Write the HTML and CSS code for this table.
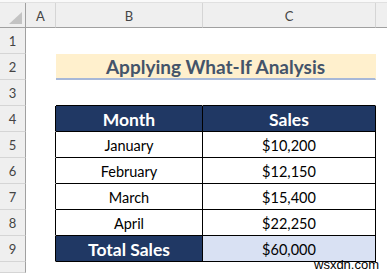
FILE: index.html
```html
<!DOCTYPE html>
<html>
<head>
<meta charset="utf-8">
<link rel="stylesheet" href="styles.css">
</head>
<body>
<div class="topstrip"></div>
<div class="sheet">
  <div class="ch corner"><span class="tri"></span></div>
  <div class="ch">A</div>
  <div class="ch">B</div>
  <div class="ch">C</div>
  <div class="ch last"></div>

  <div class="rh">1</div><div class="c"></div><div class="c"></div><div class="c"></div><div class="c"></div>

  <div class="rh">2</div><div class="c"></div><div class="c title">Applying What-If Analysis</div><div class="c"></div>

  <div class="rh">3</div><div class="c"></div><div class="c edge-b"></div><div class="c edge-b"></div><div class="c"></div>

  <div class="rh">4</div><div class="c edge-r"></div><div class="c t head">Month</div><div class="c t head">Sales</div><div class="c"></div>

  <div class="rh">5</div><div class="c edge-r"></div><div class="c t">January</div><div class="c t">$10,200</div><div class="c"></div>

  <div class="rh">6</div><div class="c edge-r"></div><div class="c t">February</div><div class="c t">$12,150</div><div class="c"></div>

  <div class="rh">7</div><div class="c edge-r"></div><div class="c t">March</div><div class="c t">$15,400</div><div class="c"></div>

  <div class="rh">8</div><div class="c edge-r"></div><div class="c t">April</div><div class="c t">$22,250</div><div class="c"></div>

  <div class="rh">9</div><div class="c edge-r"></div><div class="c t head">Total Sales</div><div class="c t total">$60,000</div><div class="c"></div>

  <div class="rh"></div><div class="c"></div><div class="c"></div><div class="c"></div><div class="c"></div>
</div>
<div class="watermark">wsxdn.com</div>
</body>
</html>
```

FILE: styles.css
```css
* { box-sizing: border-box; }
html, body { margin: 0; padding: 0; background: #ffffff; }
body {
  width: 387px;
  height: 273px;
  overflow: hidden;
  position: relative;
  font-family: Lato, "Open Sans", sans-serif;
}
.topstrip {
  height: 3px;
  background: #f9f9f9;
  border-bottom: 1px solid #e0e0e0;
}
.sheet {
  display: grid;
  height: 270px;
  grid-template-columns: 26px 30px 147px 173px 1fr;
  grid-template-rows: 25px repeat(9, 26px) 1fr;
}
.ch {
  background: #efefef;
  border-right: 1px solid #d5d5d5;
  border-bottom: 1px solid #a0a0a0;
  color: #444444;
  font-size: 13px;
  display: flex;
  align-items: center;
  justify-content: center;
  padding-top: 2px;
}
.ch.last { border-right: none; }
.corner {
  position: relative;
  border-right: 1px solid #a0a0a0;
}
.tri {
  position: absolute;
  right: 3px;
  bottom: 3px;
  width: 0;
  height: 0;
  border-left: 13px solid transparent;
  border-bottom: 12px solid #c3c3c3;
}
.rh {
  background: #efefef;
  border-right: 1px solid #a0a0a0;
  border-bottom: 1px solid #d5d5d5;
  color: #444444;
  font-size: 13px;
  display: flex;
  align-items: center;
  justify-content: center;
  padding-top: 1px;
}
.c {
  border-right: 1px solid transparent;
  border-bottom: 1px solid transparent;
  display: flex;
  align-items: center;
  justify-content: center;
  font-size: 14.5px;
  color: #000000;
}
.edge-r { border-right-color: #000000; }
.edge-b { border-bottom-color: #000000; }
.title {
  grid-column: span 2;
  background: #fff0cd;
  border-bottom: 2px solid #a7b8d8;
  color: #44546a;
  font-weight: 700;
  font-size: 19px;
  padding-top: 1px;
}
.t {
  border-right-color: #000000;
  border-bottom-color: #000000;
  padding-top: 1px;
}
.head {
  background: #203864;
  color: #ffffff;
  font-weight: 700;
  font-size: 17.5px;
}
.total { background: #d9e1f3; }
.watermark {
  position: absolute;
  left: 314px;
  top: 257px;
  font-family: "Liberation Sans", Arial, sans-serif;
  font-size: 13px;
  color: #000000;
}
```
